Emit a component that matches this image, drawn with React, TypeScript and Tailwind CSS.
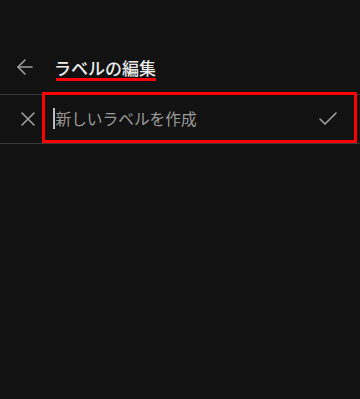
import React from 'react';
import { ArrowLeft, X, Check } from 'lucide-react';

export default function App() {
  return (
    <div
      className="relative w-[360px] h-[399px] bg-[#121212] overflow-hidden"
      style={{ fontFamily: '"Noto Sans CJK JP", "Noto Sans", sans-serif' }}
    >
      <div className="pt-[40px]">
        {/* header */}
        <div className="flex items-center h-[54px]">
          <button className="w-[53px] pl-[13px] text-[#9e9e9e]">
            <ArrowLeft className="w-[24px] h-[24px]" strokeWidth={1.6} />
          </button>
          <div className="relative ml-[1px]">
            <h1 className="text-[17px] font-medium text-[#ececec] leading-none">ラベルの編集</h1>
            <span className="absolute left-[2px] right-0 top-[19px] h-[3px] bg-[#ff0000]" />
          </div>
        </div>

        {/* new label row */}
        <div className="relative flex items-center h-[50px] border-y border-[#3b3b3b]">
          <button className="w-[42px] pl-[16px] text-[#a0a0a0]">
            <X className="w-[24px] h-[24px]" strokeWidth={1.6} />
          </button>
          <div className="flex-1 flex items-center pl-[11px]">
            <span className="w-[1.5px] h-[21px] bg-[#bdbdbd]" />
            <span className="ml-[1px] text-[15.7px] text-[#9a9a9a]">新しいラベルを作成</span>
          </div>
          <button className="pr-[20px] text-[#a0a0a0]">
            <Check className="w-[24px] h-[24px]" strokeWidth={1.6} />
          </button>
          <div className="absolute left-[42px] top-[-3px] w-[315px] h-[51px] border-[3px] border-[#ff0000] pointer-events-none" />
        </div>
      </div>
    </div>
  );
}
